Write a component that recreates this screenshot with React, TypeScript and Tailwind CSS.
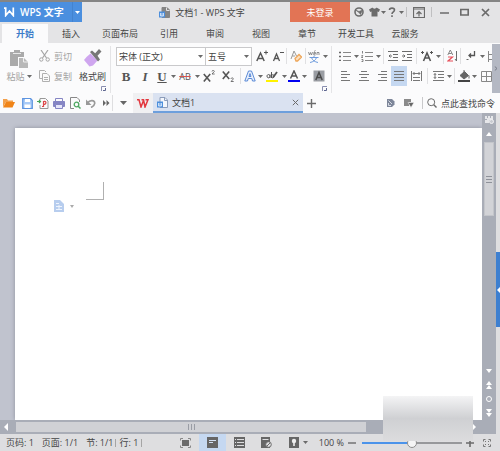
import { useState } from "react";
import type { ReactNode } from "react";

const TABS = [
  "开始",
  "插入",
  "页面布局",
  "引用",
  "审阅",
  "视图",
  "章节",
  "开发工具",
  "云服务",
];

const W14 = "w-[14px]";
const W18 = "w-[18px]";
const W27 = "w-[27px]";

function Svg({
  w = 12,
  h = 12,
  children,
}: {
  w?: number;
  h?: number;
  children: ReactNode;
}) {
  return (
    <svg
      width={w}
      height={h}
      viewBox={`0 0 ${w} ${h}`}
      fill="none"
      stroke="#6b6b6b"
      className="block shrink-0"
      aria-hidden="true"
    >
      {children}
    </svg>
  );
}

function Tool({
  label,
  width = "w-4",
  className = "",
  children,
}: {
  label: string;
  width?: string;
  className?: string;
  children: ReactNode;
}) {
  return (
    <button
      type="button"
      aria-label={label}
      className={`flex h-full shrink-0 items-center justify-center ${width} ${className}`}
    >
      {children}
    </button>
  );
}

function CaretIcon() {
  return (
    <Svg w={5} h={3}>
      <path d="M0 0h5L2.5 3z" fill="#6b6b6b" stroke="none" />
    </Svg>
  );
}

function Caret({ label, width = "w-[6px]" }: { label: string; width?: string }) {
  return (
    <Tool label={label} width={width}>
      <CaretIcon />
    </Tool>
  );
}

function Sep() {
  return <span className="mx-[2px] h-4 w-px shrink-0 bg-[#e0e0e2]" />;
}

function Launcher({ label }: { label: string }) {
  return (
    <button type="button" aria-label={label}>
      <Svg w={5} h={5}>
        <path d="M.5 5V.5H5" stroke="#8a8fb0" />
        <path d="M2 4.500h2.500V2" stroke="#5e6690" />
      </Svg>
    </button>
  );
}

function DocIcon({ gray = true }: { gray?: boolean }) {
  return (
    <Svg w={11} h={11}>
      <path
        d="M3 .5h5L10.500 3v7.500H3z"
        fill={gray ? "#858585" : "#f4f7fc"}
        stroke={gray ? "#858585" : "#8b9cba"}
      />
      <path d="M7.500 .5v3h3" stroke={gray ? "#e4e4e6" : "#8b9cba"} />
      <path d="M0 4.500h6v6H0z" fill="#4d8fdc" stroke="none" />
      <path d="M1.500 6v3h3V6M3 6v3" stroke="#e8f1fc" strokeWidth=".8" />
    </Svg>
  );
}

function TitleBar() {
  return (
    <header className="flex h-6 shrink-0 border-t-2 border-[#858585] bg-[#e4e4e6]">
      <button
        type="button"
        className="flex h-5 w-[82px] shrink-0 items-center bg-[#4b8fdf] pl-1 text-white"
      >
        <Svg w={11} h={10}>
          <path d="M0 1.200h1.700V8.500L5.500 4l3.800 4.500V.5" stroke="#fff" strokeWidth="1.700" />
        </Svg>
        <span className="ml-[5px] flex-1 text-left text-[10px] font-semibold">WPS 文字</span>
        <span className="flex h-full w-[10px] items-center justify-center border-l border-[#4383cf]">
          <svg width="5" height="3" viewBox="0 0 5 3" aria-hidden="true">
            <path d="M0 0h5L2.500 3z" fill="#fff" />
          </svg>
        </span>
      </button>
      <div className="flex h-5 min-w-0 flex-1 items-center justify-center gap-[5px] pl-8">
        <DocIcon />
        <h1 className="whitespace-nowrap">文档1 - WPS 文字</h1>
      </div>
      <button type="button" className="h-5 w-[60px] shrink-0 bg-[#e27455] text-white">
        未登录
      </button>
      <div className="flex h-5 w-[150px] shrink-0 items-center pl-px">
        <Tool label="皮肤中心">
          <Svg w={10} h={10}>
            <circle cx="5" cy="5" r="4" strokeWidth="1.600" />
            <path d="M1.500 3 5 4.500 8.500 3 6.500 7.500 5 5.500z" fill="#6b6b6b" stroke="#6b6b6b" strokeWidth=".6" />
          </Svg>
        </Tool>
        <Tool label="换肤" width={W14}>
          <Svg w={11} h={10}>
            <path
              d="M3.500.5C4 2 7 2 7.500.5L11 2.500 9.800 5 8.500 4.500V9.500h-6V4.500L1.200 5 0 2.500z"
              fill="#6b6b6b"
              stroke="none"
            />
          </Svg>
        </Tool>
        <Caret label="换肤选项" width="w-1" />
        <Tool label="帮助" width={W14}>
          <Svg w={8} h={10}>
            <path d="M1.500 3C1.500.5 6.500.5 6.500 3 6.500 4.800 4 4.800 4 7M4 8.200V10" strokeWidth="1.600" />
          </Svg>
        </Tool>
        <Caret label="帮助选项" width="w-1" />
        <span className="ml-[3px] h-[10px] w-px bg-[#bfbfc1]" />
        <Tool label="隐藏功能区" width="w-6">
          <Svg w={12} h={11}>
            <path d="M.5.5h11v10H.5zM0 2h12M6 9.500V4.500M3.500 7 6 4.500 8.500 7" strokeWidth="1.200" />
          </Svg>
        </Tool>
        <span className="h-[10px] w-px bg-[#bfbfc1]" />
        <Tool label="最小化" width="w-6">
          <Svg w={9} h={10}>
            <path d="M0 6h9" strokeWidth="1.500" />
          </Svg>
        </Tool>
        <Tool label="最大化">
          <Svg w={9} h={8}>
            <path d="M.8 1.500h7.400v5.500H.8z" strokeWidth="1.600" />
          </Svg>
        </Tool>
        <Tool label="关闭" width={W27}>
          <Svg w={9} h={9}>
            <path d="M1 1l7 7M8 1 1 8" strokeWidth="1.700" />
          </Svg>
        </Tool>
      </div>
    </header>
  );
}

function MenuTabs() {
  const [active, setActive] = useState("开始");
  return (
    <nav className="flex h-[19px] shrink-0 bg-[#e4e4e6] pl-[2px]">
      {TABS.map((tab) => (
        <button
          key={tab}
          type="button"
          onClick={() => setActive(tab)}
          className={`min-w-[46px] px-2 whitespace-nowrap ${
            tab === active ? "bg-[#fbfbfc] font-bold text-[#3b7cc9]" : ""
          }`}
        >
          {tab}
        </button>
      ))}
    </nav>
  );
}

function ClipboardGroup() {
  return (
    <section className="flex w-[111px] shrink-0 flex-col border-r border-[#e4e4e6]">
      <div className="flex h-10 text-[#a3a3a3]">
        <button type="button" className="flex w-9 flex-col items-center pt-1 pl-[2px]">
          <Svg w={18} h={18}>
            <path d="M0 2h4V0h6v2h4v5H8v9H0z" fill="#aaa" stroke="none" />
            <path d="M3 3.500h8" stroke="#e8e8e8" />
            <path d="M9 8h5l4 4v6H9z" fill="#b8b8b8" stroke="none" />
            <path d="M13.500 8v4H18" stroke="#eee" />
          </Svg>
          <span className="flex h-4 items-center gap-[2px] whitespace-nowrap">
            粘贴
            <CaretIcon />
          </span>
        </button>
        <div className="flex w-[39px] flex-col">
          <button type="button" className="flex h-5 items-center gap-1 pl-[3px] whitespace-nowrap">
            <Svg w={11} h={12}>
              <g stroke="#a5a5a5">
                <path d="M2 0l5.500 8M9 0 3.500 8" strokeWidth="1.200" />
                <circle cx="2.300" cy="9.500" r="1.700" />
                <circle cx="8.700" cy="9.500" r="1.700" />
              </g>
            </Svg>
            剪切
          </button>
          <button type="button" className="flex h-5 items-center gap-1 pl-[3px] whitespace-nowrap">
            <Svg w={11} h={12}>
              <g stroke="#b0b0b0">
                <path d="M3 8.500H.5v-8h5L7 2" />
                <path d="M3.500 3.500H8L10.500 6v5.500h-7z" fill="#fafafa" />
                <path d="M5 7.500h4M5 9.500h4" />
              </g>
            </Svg>
            复制
          </button>
        </div>
        <button type="button" className="flex flex-1 flex-col items-center pt-[3px] text-[#444]">
          <Svg w={18} h={18}>
            <path d="M6.500 4.500 13.500 11.500 9 16.500 5.500 17.500 0 11 2.500 8z" fill="#cfa6ef" stroke="none" />
            <path
              d="M6 3 8 1.500l3.200 2.700L15 0l2.500 2.500-4 4.300 2.500 3.700-2 2z"
              fill="#777"
              stroke="none"
            />
          </Svg>
          <span className="flex h-5 items-center whitespace-nowrap">格式刷</span>
        </button>
      </div>
      <div className="flex justify-end pr-1">
        <Launcher label="剪贴板设置" />
      </div>
    </section>
  );
}

function PickList({ label, options, width }: { label: string; options: string[]; width: string }) {
  return (
    <span className={`relative flex h-[19px] shrink-0 items-center border border-[#c9c9cb] bg-white ${width}`}>
      <select aria-label={label} className="h-full w-full appearance-none bg-transparent pl-[2px] outline-none">
        {options.map((o) => (
          <option key={o}>{o}</option>
        ))}
      </select>
      <span className="pointer-events-none absolute right-[2px]">
        <CaretIcon />
      </span>
    </span>
  );
}

function FontGroup() {
  return (
    <section className="flex w-[221px] shrink-0 flex-col border-r border-[#e4e4e6] pl-[5px]">
      <div className="flex h-5 items-center">
        <PickList label="字体" options={["宋体 (正文)", "黑体"]} width="w-[90px]" />
        <PickList label="字号" options={["五号", "四号"]} width="w-[46px] border-l-0" />
        <Tool label="增大字号" width="w-5">
          <Svg>
            <path d="M.8 11 4.500 3 8.200 11M2 8.500h5" stroke="#555" strokeWidth="1.500" />
            <path d="M8 2.500h4M10 .5v4" stroke="#555" />
          </Svg>
        </Tool>
        <Tool label="减小字号" width="w-3">
          <Svg>
            <path d="M1.500 11 4.500 4 7.500 11M2.700 8.500h3.600" stroke="#555" strokeWidth="1.300" />
            <path d="M8 2.500h4" stroke="#555" />
          </Svg>
        </Tool>
        <Sep />
        <Tool label="清除格式" width={W14}>
          <Svg>
            <path d="M1 9 4 1l2.500 5M2.300 6H5" stroke="#999" />
            <path d="M5 8.500 9 4.500l2.500 2.500-4 4H6z" fill="#fbe0c2" stroke="#eda65a" strokeWidth="1.300" />
          </Svg>
        </Tool>
        <Sep />
        <Tool label="拼音指南" width="w-3">
          <Svg w={12} h={13}>
            <path
              d="M.5 2 1.500 5 2.500 2.500 3.500 5 4.500 2M7.500 5H5.800V2.500h1.700v1.200H6M9 5V2.500h2V5M6 1.500 7.500.5"
              stroke="#777"
              strokeWidth=".8"
            />
            <path d="M1.500 7.500h9M6 6v1.500M3.500 7.500C4 10 7 12 10 12.500M8.500 7.500C8 10 5 12 2 12.500" stroke="#6e9bdc" />
          </Svg>
        </Tool>
        <Caret label="拼音选项" width="w-[10px]" />
      </div>
      <div className="flex h-5 items-center text-[#555]">
        <Tool label="加粗" width="w-5">
          <b className="font-['Liberation_Serif',serif] text-[13px]">B</b>
        </Tool>
        <Tool label="倾斜" width={W18}>
          <i className="font-['Liberation_Serif',serif] text-[13px] font-bold">I</i>
        </Tool>
        <Tool label="下划线">
          <u className="font-['Liberation_Serif',serif] text-[13px] font-bold">U</u>
        </Tool>
        <Caret label="下划线选项" />
        <Tool label="删除线" width={W18}>
          <s className="decoration-[#d9534f]">AB</s>
        </Tool>
        <Caret label="删除线选项" />
        <Tool label="上标" width={W18}>
          <Svg>
            <path d="M.8 4l6.400 7.500M7.200 4 .8 11.500" stroke="#555" strokeWidth="1.600" />
            <path d="M9 1.500C9 0 11.500 0 11.300 1.500L9 4h2.700" stroke="#555" strokeWidth=".8" />
          </Svg>
        </Tool>
        <Tool label="下标" width="w-5">
          <Svg>
            <path d="M.8 1.500 7.200 9M7.200 1.500.8 9" stroke="#555" strokeWidth="1.600" />
            <path d="M9 9C9 7.500 11.500 7.500 11.300 9L9 11.500h2.700" stroke="#555" strokeWidth=".8" />
          </Svg>
        </Tool>
        <Sep />
        <Tool label="文字效果" width={W14}>
          <Svg>
            <path
              d="M.8 11 4.500 1h3l3.700 10H8.500L7.800 8.500H4.200L3.500 11zM5 6.500h2L6 3.500z"
              fill="#eaf1fc"
              stroke="#5b8ad6"
            />
          </Svg>
        </Tool>
        <Caret label="文字效果选项" />
        <Tool label="突出显示" width={W18}>
          <Svg>
            <path
              d="M4 4.500V8M4 6.200C4 4 1 4 1 6.200S4 8.300 4 6.500M5.500 2v6M5.500 6C6 4 8.500 4.500 8 6.500S5.500 8 5.500 7"
              stroke="#555"
            />
            <path d="M7 7.500 11 2" stroke="#555" strokeWidth="1.800" />
            <path d="M0 10h12v2H0z" fill="#fff200" stroke="none" />
          </Svg>
        </Tool>
        <Caret label="突出显示选项" />
        <Tool label="字体颜色" width={W14}>
          <Svg>
            <path d="M2.500 8.500 6 1l3.500 7.500M3.800 6h4.400" stroke="#555" strokeWidth="1.500" />
            <path d="M0 10h12v2H0z" fill="#0000f0" stroke="none" />
          </Svg>
        </Tool>
        <Caret label="字体颜色选项" />
        <Tool label="字符底纹" width="w-6">
          <Svg>
            <path d="M.5.5h11v11H.5z" fill="#9a9da3" stroke="none" />
            <path d="M2.800 10 6 2.500 9.200 10M4 7.500h4" stroke="#4b4b4b" strokeWidth="1.500" />
          </Svg>
        </Tool>
      </div>
      <div className="flex justify-end pr-1">
        <Launcher label="字体设置" />
      </div>
    </section>
  );
}

function Lines({ d }: { d: string }) {
  return (
    <Svg w={10} h={10}>
      <path d={d} stroke="#777" />
    </Svg>
  );
}

function ParagraphGroup() {
  return (
    <section className="min-w-0 flex-1 overflow-hidden pl-[5px]">
      <div className="flex h-5 items-center">
        <Tool label="项目符号">
          <Svg w={12} h={10}>
            <path d="M4 1.500h8M4 5.500h8M4 9.500h8" stroke="#888" />
            <path d="M0 1.500h2M0 5.500h2M0 9.500h2" stroke="#666" strokeWidth="1.600" />
          </Svg>
        </Tool>
        <Caret label="项目符号选项" />
        <Tool label="编号">
          <Svg w={12} h={11}>
            <path d="M4 1.500h8M4 5.500h8M4 9.500h8" stroke="#888" />
            <path d="M1.500 0v2.500M.5 4.500h1.300L.5 6.500h1.500M.5 8.500h1.500v2H.5" stroke="#666" strokeWidth=".8" />
          </Svg>
        </Tool>
        <Caret label="编号选项" />
        <Sep />
        <Tool label="减少缩进" width={W14}>
          <Svg w={10} h={10}>
            <path d="M0 .5h10M5 3.500h5M5 6.500h5M0 9.500h10M1 5h3M2.500 3.500 1 5l1.500 1.500" />
          </Svg>
        </Tool>
        <Tool label="增加缩进" width={W14}>
          <Svg w={10} h={10}>
            <path d="M0 .5h10M5 3.500h5M5 6.500h5M0 9.500h10M0 5h3M1.500 3.500 3 5 1.500 6.500" />
          </Svg>
        </Tool>
        <Sep />
        <Tool label="中文版式">
          <Svg>
            <path d="M2.500 11 6 3l3.500 8M3.800 8h4.400" stroke="#555" strokeWidth="1.600" />
            <path d="M0 2.500h3M1.500 1v3M9 2.500h3M10.500 1v3" stroke="#555" />
          </Svg>
        </Tool>
        <Caret label="中文版式选项" />
        <Sep />
        <Tool label="排序" width="w-3">
          <Svg w={11} h={12}>
            <path d="M.8 5 3.300 0 5.800 5M1.800 3.500h3" stroke="#888" />
            <path d="M1 7h4.500L1 11h5" stroke="#e8505b" strokeWidth="1.200" />
            <path d="M9.500 1v10M8 9l1.500 2" />
          </Svg>
        </Tool>
        <Sep />
        <Tool label="显示段落标记">
          <Svg w={10} h={10}>
            <path d="M8.500 0v4.500H3M5 2.500l-2 2 2 2" stroke="#555" strokeWidth="1.300" />
            <path d="M.5 8.500h2" />
          </Svg>
        </Tool>
        <Caret label="段落标记选项" />
        <Tool label="制表位" width={W14}>
          <Svg w={8} h={11}>
            <path d="M.5 0v11M0 3.500h8M0 8.500h8" stroke="#888" />
          </Svg>
        </Tool>
      </div>
      <div className="flex h-5 items-center">
        <Tool label="左对齐" width={W18}>
          <Lines d="M0 .5h6M0 3.500h9M0 6.500h6M0 9.500h9" />
        </Tool>
        <Tool label="居中" width={W18}>
          <Lines d="M2 .5h6M0 3.500h10M2 6.500h6M0 9.500h10" />
        </Tool>
        <Tool label="右对齐" width={W18}>
          <Lines d="M4 .5h6M1 3.500h9M4 6.500h6M1 9.500h9" />
        </Tool>
        <Tool label="两端对齐" className="bg-[#c5d8f1]">
          <Lines d="M0 .5h10M0 3.500h10M0 6.500h10M0 9.500h10" />
        </Tool>
        <Tool label="分散对齐" width={W18}>
          <Svg w={11} h={10}>
            <path
              d="M.5 0v10M10.500 0v10M2 2.500h7M3.500 1 2 2.500 3.500 4M7.500 1 9 2.500 7.500 4M2 6.500h7M2 9.500h7"
              stroke="#777"
            />
          </Svg>
        </Tool>
        <Sep />
        <Tool label="行距">
          <Svg w={11} h={10}>
            <path
              d="M0 .5h11M5 3.500h6M5 6.500h6M0 9.500h11M2 2.500v5M.8 4 2 2.500 3.200 4M.8 6 2 7.500 3.200 6"
              stroke="#777"
            />
          </Svg>
        </Tool>
        <Caret label="行距选项" />
        <Sep />
        <Tool label="底纹颜色" width={W14}>
          <Svg>
            <path d="M2 5.500 6.500 1.500l4 4-4.500 3.500z" fill="#666" stroke="#666" />
            <path d="M6 0v4M11 5.500v3" />
            <path d="M0 10h12v2H0z" fill="#444" stroke="none" />
          </Svg>
        </Tool>
        <Caret label="底纹颜色选项" />
        <Tool label="边框" width={W18}>
          <Svg w={11} h={11}>
            <path d="M.5.5h10v10H.5zM5.500 0v11M0 5.500h11" stroke="#888" />
          </Svg>
        </Tool>
      </div>
    </section>
  );
}

function Ribbon() {
  return (
    <div className="flex h-[50px] shrink-0 bg-[#fbfbfc]">
      <div className="flex min-w-0 flex-1 pt-[3px]">
        <ClipboardGroup />
        <FontGroup />
        <ParagraphGroup />
      </div>
      <button
        type="button"
        aria-label="更多功能"
        className="mt-px flex w-2 shrink-0 items-center justify-center bg-[#b4b8c3]"
      >
        <Svg w={4} h={5}>
          <path d="M.8.5 3 2.500.8 4.500" stroke="#777c88" />
        </Svg>
      </button>
    </div>
  );
}

function DocumentBar() {
  return (
    <div className="flex h-5 shrink-0 items-center bg-[#fbfbfc]">
      <Tool label="打开" width={W18}>
        <Svg w={12} h={10}>
          <path d="M0 9V1h4l1 1.500h5V4H3z" fill="#f3a04b" stroke="none" />
          <path d="M0 9.500 3 4h9L9.500 9.500z" fill="#f08418" stroke="none" />
        </Svg>
      </Tool>
      <Tool label="保存" width={W18}>
        <Svg w={11} h={11}>
          <path d="M.7.700h8L10.300 2.500v7.800H.7z" fill="#a9cbf7" stroke="#5d94e0" strokeWidth="1.200" />
          <path d="M3 1h5v3H3zM2.500 6.500h6V10h-6z" fill="#fff" stroke="none" />
        </Svg>
      </Tool>
      <Tool label="输出为PDF" width={W14}>
        <Svg w={12} h={11}>
          <path d="M3 2V.5h5.500L11 3v7.500H3V7" stroke="#999" />
          <path d="M0 3.500h3.500M2 2l1.500 1.500L2 5" stroke="#46a35a" strokeWidth="1.200" />
          <path d="M6.500 9V3.500C10 2.500 9.500 6.500 6.500 6.500M5 8.500h2" stroke="#dc4a4a" strokeWidth="1.200" />
        </Svg>
      </Tool>
      <Tool label="打印" width={W18}>
        <Svg w={12} h={11}>
          <path d="M2.500 3.500v-3h7v3" stroke="#8585c4" />
          <path d="M.5 3.500h11v5H.5z" fill="#8585c4" stroke="#8585c4" />
          <path d="M2.500 6.500h7v4h-7z" fill="#e6e6fa" stroke="#8585c4" />
        </Svg>
      </Tool>
      <Tool label="打印预览" width={W14}>
        <Svg w={11} h={12}>
          <path d="M4 11.500H.5V.5H7L9.500 3v2" stroke="#888" />
          <circle cx="6.500" cy="7.500" r="2.300" stroke="#4fa862" strokeWidth="1.300" />
          <path d="M8 9l2.500 2.500" stroke="#4fa862" strokeWidth="1.500" />
        </Svg>
      </Tool>
      <Tool label="撤销" width={W18}>
        <Svg w={10} h={9}>
          <path d="M1.500 4C4 .5 9 1 8.700 4.500 8.500 6.500 7 7.500 5 8.500" stroke="#999" strokeWidth="1.700" />
          <path d="M0 .5v5.500h5.500z" fill="#999" stroke="none" />
        </Svg>
      </Tool>
      <Tool label="更多" width="w-3">
        <Svg w={7} h={6}>
          <path d="M0 0 3 3 0 6zM3.500 0l3 3-3 3z" fill="#666" stroke="none" />
        </Svg>
      </Tool>
      <span className="h-4 w-px bg-[#dedee0]" />
      <Tool label="标签列表" width="w-5">
        <Svg w={7} h={4}>
          <path d="M0 0h7L3.500 4z" fill="#666" stroke="none" />
        </Svg>
      </Tool>
      <Tool label="WPS 首页" width="w-5" className="bg-[#f0f0f2]">
        <Svg w={12} h={9}>
          <path d="M0 .8h2L4 8l2.500-6.500M4.500.8h2L8 8 11 .8H8.500" stroke="#e2383f" strokeWidth="1.500" />
        </Svg>
      </Tool>
      <div className="flex h-full w-[150px] shrink-0 items-center border-b-2 border-[#6d9fdc] bg-[#dae2f1] px-1">
        <DocIcon gray={false} />
        <span className="ml-1 flex-1">文档1</span>
        <Tool label="关闭文档" width="w-2">
          <Svg w={7} h={7}>
            <path d="M.8.800l5.400 5.400M6.200.8.800 6.200" />
          </Svg>
        </Tool>
      </div>
      <Tool label="新建文档" width="w-[17px]">
        <Svg w={9} h={9}>
          <path d="M4.500 0v9M0 4.500h9" strokeWidth="1.400" />
        </Svg>
      </Tool>
      <div className="flex h-full flex-1 items-center justify-end pr-[5px]">
        <Tool label="云文档" width={W18}>
          <Svg w={8} h={8}>
            <path d="M0 0h5l2.500 2.500v3L5 8H0z" fill="#7d8699" stroke="none" />
            <path d="M1.500 1.500 5 5M1.500 4v2.500H4" stroke="#d5d9e2" />
          </Svg>
        </Tool>
        <Tool label="推送" width={W18}>
          <Svg w={10} h={9}>
            <path d="M0 0h7v3H5v4H0z" fill="#8a8a8a" stroke="none" />
            <path d="M4 3.500h6L7 8.500z" fill="#666" stroke="#fbfbfc" strokeWidth=".5" />
          </Svg>
        </Tool>
        <span className="mx-1 h-3 w-px bg-[#c9c9cb]" />
        <button type="button" className="flex items-center gap-1 whitespace-nowrap">
          <Svg w={10} h={10}>
            <circle cx="4.200" cy="4.200" r="3.500" />
            <path d="M6.800 6.800 9.500 9.500" strokeWidth="1.400" />
          </Svg>
          点此查找命令
        </button>
      </div>
    </div>
  );
}

function WhiteGlyph({ d, label, h = 8 }: { d: string; label: string; h?: number }) {
  return (
    <button type="button" aria-label={label} className="flex h-[14px] w-full items-center justify-center">
      <svg width="8" height={h} viewBox={`0 0 8 ${h}`} fill="#fff" aria-hidden="true">
        <path d={d} />
      </svg>
    </button>
  );
}

function VerticalScroll() {
  return (
    <div className="flex w-[14px] shrink-0 flex-col bg-[#a9adb7]">
      <button type="button" aria-label="标尺" className="flex h-[14px] items-center justify-center">
        <Svg w={9} h={8}>
          <path d="M0 0h8v4H4v3H0z" fill="#e6e7ea" stroke="none" />
          <path d="M2.500 0v2M5.500 0v2M0 3.500h2" stroke="#a9adb7" />
          <circle cx="6.500" cy="5.500" r="2" fill="#c9cbd1" stroke="#f0f0f2" />
        </Svg>
      </button>
      <WhiteGlyph label="向上滚动" h={4} d="M1 4 4 0l3 4z" />
      <div className="mx-[2px] mt-px flex h-[74px] flex-col items-center justify-center gap-[2px] border border-[#c3c5ca] bg-[#d2d3d7]">
        <span className="h-px w-[6px] bg-[#8f929a]" />
        <span className="h-px w-[6px] bg-[#8f929a]" />
        <span className="h-px w-[6px] bg-[#8f929a]" />
      </div>
      <div className="flex-1" />
      <WhiteGlyph label="向下滚动" h={4} d="M1 0h6L4 4z" />
      <WhiteGlyph label="上一页" d="M1 4 4 0l3 4zM1 8l3-4 3 4z" />
      <button type="button" aria-label="选择浏览对象" className="flex h-[14px] items-center justify-center">
        <span className="size-[6px] rounded-full border border-white" />
      </button>
      <WhiteGlyph label="下一页" d="M1 0h6L4 4zM1 4h6L4 8z" />
    </div>
  );
}

function Workspace() {
  return (
    <main className="flex min-h-0 flex-1">
      <div className="flex min-w-0 flex-1 flex-col">
        <div className="flex min-h-0 flex-1">
          <div className="flex min-w-0 flex-1 overflow-hidden bg-[#c0c3ce] pt-[15px] pl-[15px]">
            <div className="flex-1 bg-white pt-[54px] shadow-[0_0_4px_#8c909c]">
              <div className="ml-[71px] h-[18px] w-[18px] border-r border-b border-[#b0b0b0]" />
              <button type="button" aria-label="粘贴选项" className="ml-[39px] flex items-center gap-[6px]">
                <Svg w={10} h={12}>
                  <path d="M0 0h6l4 4v8H0z" fill="#b7cdee" stroke="none" />
                  <path d="M2 3.500h3M2 6.500h6M2 9.500h6M5 5v5" stroke="#eef4fd" />
                </Svg>
                <svg width="4" height="3" viewBox="0 0 4 3" aria-hidden="true">
                  <path d="M0 0h4L2 3z" fill="#aaa" />
                </svg>
              </button>
            </div>
          </div>
          <VerticalScroll />
        </div>
        <div className="flex h-[14px] shrink-0 items-center bg-[#a9adb7]">
          <button type="button" aria-label="向左滚动" className="flex w-4 justify-center">
            <svg width="4" height="8" viewBox="0 0 4 8" fill="#fff" className="mr-1" aria-hidden="true">
              <path d="M4 0v8L0 4z" />
            </svg>
          </button>
          <div className="flex h-[10px] flex-[350] items-center justify-center gap-[2px] bg-[#d0d1d5]">
            <span className="h-[6px] w-px bg-[#9a9da5]" />
            <span className="h-[6px] w-px bg-[#9a9da5]" />
            <span className="h-[6px] w-px bg-[#9a9da5]" />
          </div>
          <div className="flex-[106]" />
          <button type="button" aria-label="向右滚动" className="mr-[14px] flex w-[10px]">
            <svg width="4" height="8" viewBox="0 0 4 8" fill="#fff" aria-hidden="true">
              <path d="M0 0v8l4-4z" />
            </svg>
          </button>
        </div>
      </div>
      <aside className="flex w-1 shrink-0 flex-col bg-[#dedee0]">
        <div className="flex-[139]" />
        <button type="button" aria-label="展开任务窗格" className="flex h-[75px] items-center justify-end bg-[#3d7fd0]">
          <svg width="3" height="6" viewBox="0 0 3 6" fill="#fff" aria-hidden="true">
            <path d="M3 0v6L0 3z" />
          </svg>
        </button>
        <div className="flex-[107]" />
      </aside>
    </main>
  );
}

function StatusBar() {
  const [zoom, setZoom] = useState(50);
  return (
    <footer className="flex h-[17px] shrink-0 items-center bg-[#dedee0]">
      <div className="flex min-w-0 flex-1 items-center pl-[6px] leading-4 whitespace-nowrap">
        <span className="mr-2">页码: 1</span>
        <span className="mr-2">页面: 1/1</span>
        <span className="mr-[2px]">节: 1/1</span>
        <span className="mr-[3px] h-2 w-px bg-[#a5a5a5]" />
        <span className="mr-[3px]">行: 1</span>
        <span className="h-2 w-px bg-[#a5a5a5]" />
      </div>
      <Tool label="全屏显示" width={W27}>
        <Svg w={11} h={10}>
          <path d="M2 2h7v6H2z" fill="#6b6b6b" stroke="none" />
          <path d="M.5 2.500v-2H3M8 .5h2.500v2M10.500 7.500v2H8M3 9.500H.5v-2" stroke="#888" />
        </Svg>
      </Tool>
      <Tool label="页面视图" width={W27} className="bg-[#c5d8f1]">
        <Svg w={11} h={11}>
          <path d="M0 0h11v11H0z" fill="#666" stroke="none" />
          <path d="M2 3.500h7M2 5.500h4" stroke="#d5e2f4" />
        </Svg>
      </Tool>
      <Tool label="大纲视图" width={W27}>
        <Svg w={11} h={11}>
          <path d="M0 0h11v11H0z" fill="#666" stroke="none" />
          <path d="M1 2.500h1M3 2.500h7M1 5.500h1M3 5.500h7M1 8.500h1M3 8.500h7" stroke="#dedee0" />
        </Svg>
      </Tool>
      <Tool label="Web版式视图" width={W27}>
        <Svg w={11} h={11}>
          <path d="M0 0h9v11H0z" fill="#666" stroke="none" />
          <path d="M1.500 2.500h6" stroke="#dedee0" />
          <circle cx="7.500" cy="7.500" r="2.800" fill="#dedee0" />
          <path d="M6 9l3-3" />
        </Svg>
      </Tool>
      <Tool label="护眼模式" width="w-3" className="ml-2">
        <Svg w={10} h={11}>
          <path d="M0 0h10v11H0z" fill="#666" stroke="none" />
          <circle cx="5" cy="4" r="2.200" fill="#eee" stroke="none" />
          <path d="M5 5v4" stroke="#eee" strokeWidth="1.600" />
        </Svg>
      </Tool>
      <Caret label="护眼模式选项" width="w-[10px]" />
      <label htmlFor="zoom" className="w-9 pr-[2px] text-right leading-4 whitespace-nowrap">
        100 %
      </label>
      <Tool label="缩小" width="w-3">
        <Svg w={8} h={8}>
          <path d="M0 4h8" strokeWidth="1.400" />
        </Svg>
      </Tool>
      <input
        id="zoom"
        type="range"
        value={zoom}
        onChange={(e) => setZoom(Number(e.target.value))}
        style={{
          backgroundImage: `linear-gradient(90deg, #4b93ea ${zoom}%, #97989b ${zoom}%)`,
        }}
        className="mx-1 h-3 w-[100px] appearance-none bg-[length:100%_2px] bg-center bg-no-repeat [&::-webkit-slider-thumb]:size-[10px] [&::-webkit-slider-thumb]:appearance-none [&::-webkit-slider-thumb]:rounded-full [&::-webkit-slider-thumb]:border [&::-webkit-slider-thumb]:border-[#8e8e8e] [&::-webkit-slider-thumb]:bg-[#f5f5f5]"
      />
      <Tool label="放大" width="w-2">
        <Svg w={8} h={8}>
          <path d="M4 0v8M0 4h8" strokeWidth="1.600" />
        </Svg>
      </Tool>
      <Tool label="适合页面" width="w-[26px]">
        <Svg w={8} h={8}>
          <path
            d="M.5 2.500v-2h2M5.500.5h2v2M7.500 5.500v2h-2M2.500 7.500h-2v-2M2 2l1 1M6 2 5 3M6 6 5 5M2 6l1-1"
            stroke="#777"
          />
        </Svg>
      </Tool>
    </footer>
  );
}

export default function App() {
  return (
    <div className="relative flex h-screen flex-col overflow-hidden bg-[#fbfbfc] font-['Open_Sans','Noto_Sans_CJK_SC',sans-serif] text-[9px] leading-none text-[#444]">
      <TitleBar />
      <MenuTabs />
      <Ribbon />
      <DocumentBar />
      <Workspace />
      <StatusBar />
      <div className="pointer-events-none absolute right-[27px] bottom-[10px] h-[45px] w-[90px] bg-linear-to-b from-[#f4f4f5] via-[#cfd0d3] to-[#dcdcde]" />
    </div>
  );
}
